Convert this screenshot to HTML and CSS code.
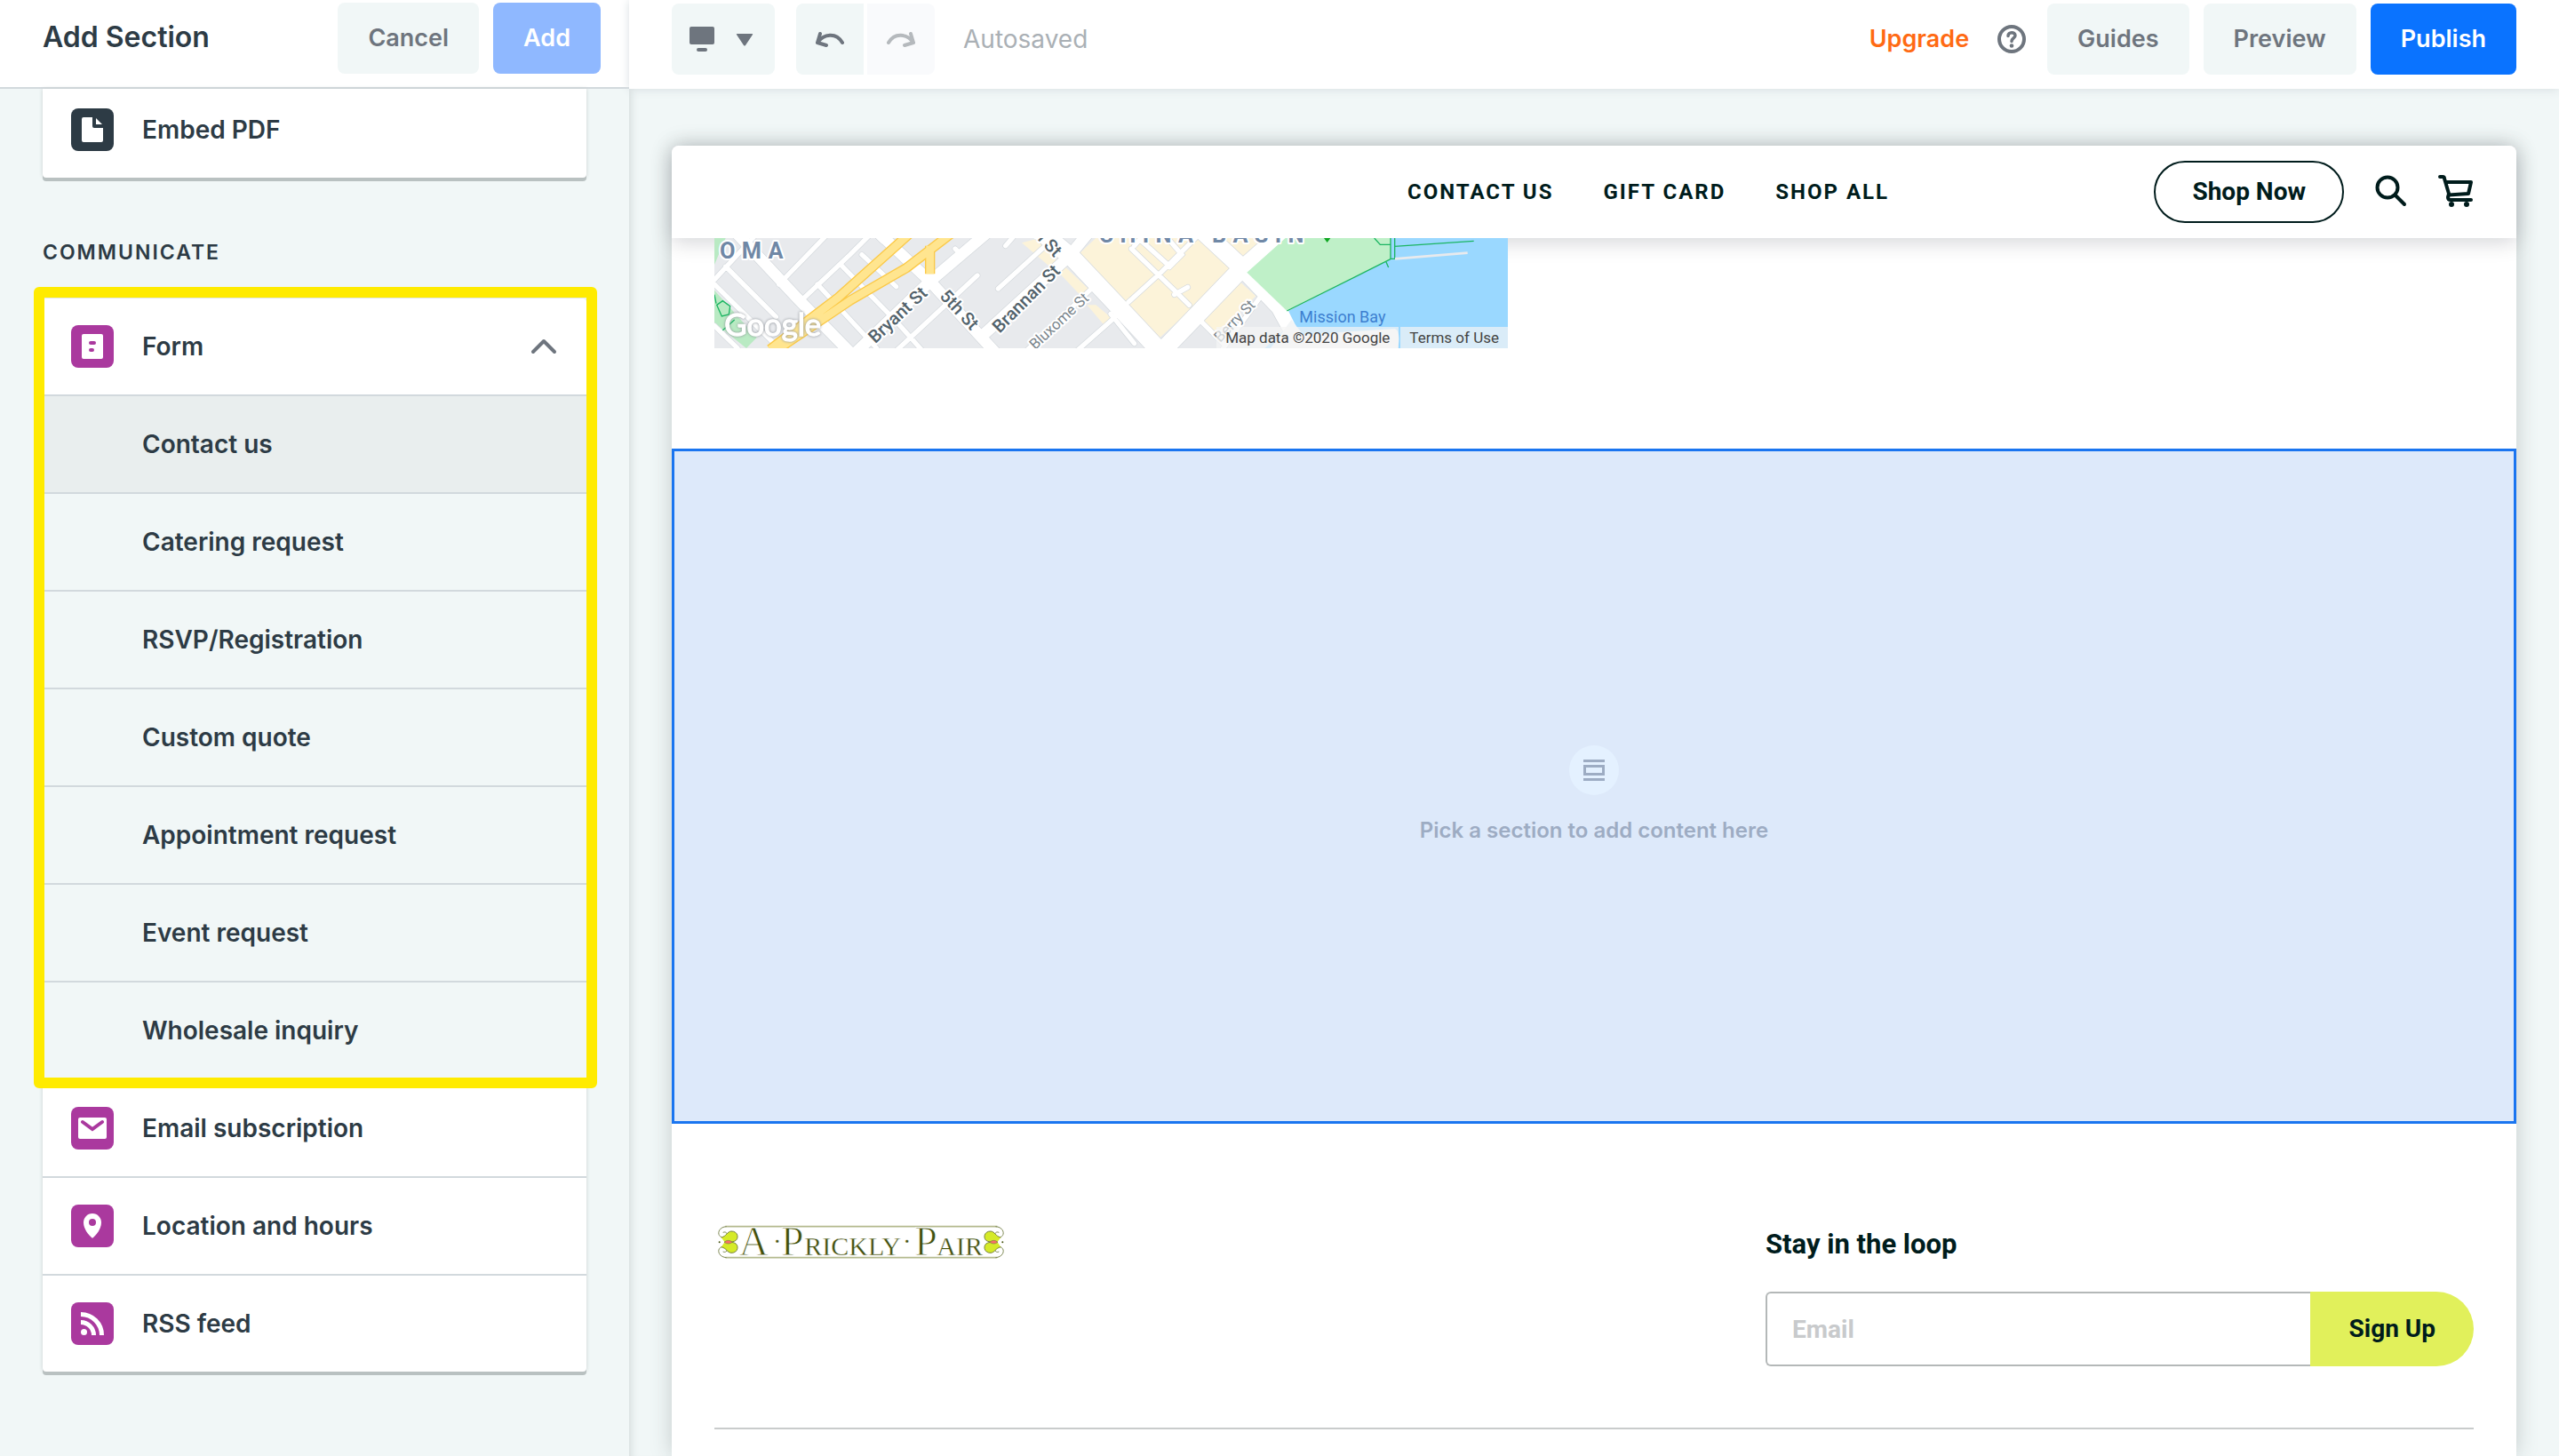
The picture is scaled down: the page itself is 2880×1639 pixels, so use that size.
FILE: index.html
```html
<!DOCTYPE html>
<html lang="en">
<head>
<meta charset="utf-8">
<meta name="viewport" content="width=device-width, initial-scale=1">
<title>Add Section</title>
<link rel="stylesheet" href="styles.css">
</head>
<body>
<div class="app">
  <aside class="sidebar">
    <header class="sidebar-head">
      <h1 class="sidebar-title">Add Section</h1>
      <button class="btn" type="button">Cancel</button>
      <button class="btn btn-add" type="button">Add</button>
    </header>
    <div class="sidebar-body">
      <div class="card card-cut">
        <button class="row row-last" type="button">
          <svg class="tile" viewBox="0 0 48 48" aria-hidden="true"><rect width="48" height="48" rx="8" fill="#2d3b45"/><path d="M14 10h10v10q0 2 2 2h10v14q0 2-2 2H14q-2 0-2-2V12q0-2 2-2z" fill="#fff"/><path d="M28 11l7 7h-7z" fill="#fff"/></svg>
          <span>Embed PDF</span>
        </button>
      </div>
      <h2 class="group-title">COMMUNICATE</h2>
      <div class="card">
        <div class="form-group">
          <button class="row" type="button" aria-expanded="true">
            <svg class="tile" viewBox="0 0 48 48" aria-hidden="true"><rect width="48" height="48" rx="8" fill="#aa399e"/><rect x="12" y="10" width="24" height="28" rx="2" fill="#fff"/><rect x="20" y="18" width="8" height="4" rx="2" fill="#aa399e"/><rect x="20" y="26" width="6" height="4" rx="2" fill="#aa399e"/></svg>
            <span>Form</span>
            <svg class="chevron" viewBox="0 0 32 20" aria-hidden="true"><path d="M4 16L16 4l12 12" fill="none" stroke="#6e757e" stroke-width="4" stroke-linecap="round" stroke-linejoin="round"/></svg>
          </button>
          <button class="row row-sub row-active" type="button">Contact us</button>
          <button class="row row-sub" type="button">Catering request</button>
          <button class="row row-sub" type="button">RSVP/Registration</button>
          <button class="row row-sub" type="button">Custom quote</button>
          <button class="row row-sub" type="button">Appointment request</button>
          <button class="row row-sub" type="button">Event request</button>
          <button class="row row-sub" type="button">Wholesale inquiry</button>
        </div>
        <button class="row" type="button">
          <svg class="tile" viewBox="0 0 48 48" aria-hidden="true"><rect width="48" height="48" rx="8" fill="#aa399e"/><rect x="8" y="12" width="32" height="24" rx="2" fill="#fff"/><path d="M13 17l11 8 11-8" fill="none" stroke="#aa399e" stroke-width="4" stroke-linecap="round"/></svg>
          <span>Email subscription</span>
        </button>
        <button class="row" type="button">
          <svg class="tile" viewBox="0 0 48 48" aria-hidden="true"><rect width="48" height="48" rx="8" fill="#aa399e"/><path d="M24 10c-6 0-10 5-10 10 0 8 6 14 9 17q1 1 2 0c3-3 9-9 9-17 0-5-4-10-10-10z" fill="#fff"/><circle cx="24" cy="20" r="4" fill="#aa399e"/></svg>
          <span>Location and hours</span>
        </button>
        <button class="row row-last" type="button">
          <svg class="tile" viewBox="0 0 48 48" aria-hidden="true"><rect width="48" height="48" rx="8" fill="#aa399e"/><circle cx="14.500" cy="33.500" r="3.500" fill="#fff"/><path d="M11 22.500a14.500 14.500 0 0 1 14.500 14.500M11 13.500a23.500 23.500 0 0 1 23.500 23.500" fill="none" stroke="#fff" stroke-width="5"/></svg>
          <span>RSS feed</span>
        </button>
      </div>
    </div>
  </aside>

  <main class="editor">
    <header class="toolbar">
      <button class="tool tool-device" type="button" aria-label="Device view">
        <svg width="76" height="32" viewBox="0 0 76 32" aria-hidden="true" fill="#6e757e"><rect x="0" y="2" width="28" height="20" rx="2"/><rect x="8" y="26" width="12" height="4" rx="2"/><path d="M54 10h16q2 0 1 1l-8 12q-1 1-2 0l-8-12q-1-1 1-1z"/></svg>
      </button>
      <div class="history">
        <button class="tool tool-undo" type="button" aria-label="Undo"><svg width="32" height="20" viewBox="0 0 32 20" aria-hidden="true" fill="none" stroke="#6e757e" stroke-width="4" stroke-linecap="round" stroke-linejoin="round"><path d="M5 4L2 14l10 3M2 14C9 4 23 2 30 14"/></svg></button>
        <button class="tool tool-redo" type="button" aria-label="Redo" disabled><svg width="32" height="20" viewBox="0 0 32 20" aria-hidden="true" fill="none" stroke="#b5b9bd" stroke-width="4" stroke-linecap="round" stroke-linejoin="round"><path d="M27 4l3 10-10 3M30 14C23 4 9 2 2 14"/></svg></button>
      </div>
      <span class="status">Autosaved</span>
      <a class="upgrade" href="#">Upgrade</a>
      <button class="help" type="button" aria-label="Help"><svg width="32" height="32" viewBox="0 0 32 32" aria-hidden="true" fill="none" stroke="#6e757e" stroke-width="4" stroke-linecap="round"><circle cx="16" cy="16" r="14"/><path d="M12 12.500c0-5 8-5 8-.5 0 3-4 3-4 6.500" stroke-width="3.500"/><circle cx="16" cy="23.500" r="2.300" fill="#6e757e" stroke="none"/></svg></button>
      <div class="actions">
        <button class="btn" type="button">Guides</button>
        <button class="btn" type="button">Preview</button>
        <button class="btn btn-publish" type="button">Publish</button>
      </div>
    </header>

    <div class="canvas">
      <div class="site">
        <header class="site-head">
          <nav class="site-nav">
            <a href="#">CONTACT US</a>
            <a href="#">GIFT CARD</a>
            <a href="#">SHOP ALL</a>
          </nav>
          <div class="site-tools">
            <button class="shop" type="button">Shop Now</button>
            <button class="icon-btn" type="button" aria-label="Search"><svg width="38" height="38" viewBox="0 0 38 38" aria-hidden="true" fill="none" stroke="#001c1c" stroke-width="4" stroke-linecap="round"><circle cx="15" cy="14" r="11.500"/><path d="M23.500 22.500L34 33"/></svg></button>
            <button class="icon-btn" type="button" aria-label="Cart"><svg width="40" height="38" viewBox="0 0 40 38" aria-hidden="true" fill="none" stroke="#001c1c" stroke-width="4" stroke-linecap="round" stroke-linejoin="round"><path d="M2 2h3q2 0 2 2l5 17-1 4q0 3 3 3h23"/><path d="M9 8h28l-3 13-22 1.500"/><circle cx="15" cy="33" r="3" fill="#001c1c" stroke="none"/><circle cx="32" cy="33" r="3" fill="#001c1c" stroke="none"/></svg></button>
          </div>
        </header>

        <section class="map-section">
          <div class="map">
            <svg class="map-art" viewBox="42 24 2679 372" role="img" aria-label="Map of Mission Bay">
              <defs>
                <g id="streets" fill="none">
                  <g class="wide"><path d="M590 0L770 170 990 410M970 0L770 170 520 410M1310 0L1240 85 940 360M110 0L320 225 500 410"/></g>
                  <g class="avenue"><path d="M1140 0L1250 90 1420 270 1560 420M1970 0L1800 150 1540 420M1690 0L1830 130 1950 255 2030 400"/></g>
                  <g class="lane"><path d="M42 165L180 15M42 180L260 396M80 120L250 290M42 320L120 396M260 180L420 15M470 115L660 310 740 400M390 180L590 396M330 240L500 80 570 10M540 80L656 188M930 150L650 410M1000 195L1165 45M1025 50L1060 10M590 15L610 35M855 60L875 80M1310 200L1090 410M1260 410L1430 260M1440 240L1550 140 1680 10M1450 60L1600 205 1645 250M1480 30L1580 120 1620 80 1560 10M1460 50L1490 15M1595 215L1640 190M1680 300L1760 380M1880 230L1760 396M1380 280L1460 380"/></g>
                </g>
              </defs>
              <rect x="42" y="24" width="2679" height="372" fill="#e8eaed"/>
              <path d="M42 24h38l-38 90zM42 200L185 360 150 396 42 310z" fill="#b9eac3"/>
              <path d="M1330 24H1900L1780 150 1535 370 1265 85zM1080 40L1140 24 1200 105 1180 125zM1205 140L1225 120 1310 200 1280 220zM1300 250L1330 250 1390 300 1360 320zM1680 300L1815 170 1870 220 1740 350z" fill="#fcf3d9"/>
              <use href="#streets" class="street-edge"/>
              <use href="#streets" class="street-fill"/>
              <path d="M1980 270L2325 95V24H2721V396H1900L1960 340 2020 350z" fill="#9ad8ff"/>
              <path d="M1840 140L1970 24H2325V95L1975 270z" fill="#bff0c8"/>
              <path d="M1990 300L2030 350 2340 330Q2360 340 2350 396H1920z" fill="#f3f5f6"/>
              <path d="M2270 24l20 22h35M2325 24v70h14V24M2325 95L1975 270M2310 105l8 18M2338 52l268-18" fill="none" stroke="#1bb562" stroke-width="4"/>
              <path d="M2340 94l245-20" stroke="#e8eaed" stroke-width="8"/>
              <path d="M42 215l6 30M50 250l20-14 25 18-4 28-24 6zM110 300l-40 35" fill="none" stroke="#1bb562" stroke-width="4"/>
              <g fill="none" stroke-linejoin="round">
                <path d="M700 10L460 225 230 400M840 10L690 125 500 235 240 410M770 50V145" stroke="#fbc947" stroke-width="34"/>
                <path d="M700 10L460 225 230 400M840 10L690 125 500 235 240 410M770 50V145" stroke="#ffe58f" stroke-width="26"/>
              </g>
              <g class="map-label">
                <text x="60" y="92" class="district">OMA</text>
                <text x="1340" y="40" class="district">CHINA BASIN</text>
                <text transform="translate(585 382) rotate(-43)">Bryant St</text>
                <text transform="translate(800 222) rotate(47)">5th St</text>
                <text transform="translate(1005 347) rotate(-45)">Brannan St</text>
                <text transform="translate(1105 0) rotate(47)">th St</text>
                <text transform="translate(1125 403) rotate(-43)" class="minor">Bluxome St</text>
                <text transform="translate(1750 378) rotate(-46)" class="minor">Berry St</text>
                <text x="2017" y="308" class="bay">Mission Bay</text>
              </g>
              <path d="M2100 24h22l-11 15z" fill="#0ca51f"/>
              <text x="76" y="355" class="watermark">Google</text>
            </svg>
            <div class="credits">
              <span class="credit">Map data ©2020 Google</span>
              <a class="credit" href="#">Terms of Use</a>
            </div>
          </div>
        </section>

        <section class="placeholder">
          <span class="placeholder-icon"><svg width="24" height="24" viewBox="0 0 24 24" aria-hidden="true" fill="none" stroke="#9dacc3" stroke-width="3"><path d="M0 1.500h24M0 22.500h24M1.500 7.500h21v9h-21z"/></svg></span>
          <p class="placeholder-text">Pick a section to add content here</p>
        </section>

        <footer class="site-foot">
          <div class="foot-main">
            <svg class="logo" viewBox="52 56 972 118" role="img" aria-label="A Prickly Pair">
              <path d="M80 63H998M80 168H998" stroke="#b3b98d" stroke-width="5"/>
              <g id="flourish">
                <path d="M84 63c-34 2-34 40-8 36 16-4 10-22-4-16M84 168c-34-2-34-40-8-36 16 4 10 22-4 16" fill="none" stroke="#7f8a55" stroke-width="3"/>
                <path d="M66 100C84 96 86 80 100 79c24-1 28 28 10 34-12 4-22 2-32 3M66 132C84 136 86 151 100 152c24 1 28-28 10-34-12-4-22-2-32-3" fill="#d5ea28" stroke="#78833f" stroke-width="3"/>
                <path d="M76 116q14-12 28 0-14 10-28 0z" fill="#fb6e6a" stroke="#78833f" stroke-width="2"/>
                <circle cx="60" cy="116" r="3" fill="#43500d"/>
              </g>
              <use href="#flourish" transform="translate(1076 0) scale(-1 1)"/>
              <text class="logo-text" y="161"><tspan x="126" class="cap">A</tspan><tspan x="240" y="142">·</tspan><tspan x="268" y="161" class="cap">P</tspan><tspan x="347">RICKLY</tspan><tspan x="678" y="142">·</tspan><tspan x="719" y="161" class="cap">P</tspan><tspan x="794">AIR</tspan></text>
            </svg>
            <form class="signup">
              <label class="signup-title" for="email">Stay in the loop</label>
              <div class="signup-row">
                <input class="signup-input" id="email" type="email" placeholder="Email">
                <button class="signup-btn" type="button">Sign Up</button>
              </div>
            </form>
          </div>
          <hr class="rule">
        </footer>
      </div>
    </div>
  </main>
</div>
</body>
</html>
```
FILE: styles.css
```css
* { box-sizing: border-box; }

body {
  margin: 0;
  background: #f1f7f7;
  color: #2d3b45;
  font: 600 28px/32px Inter, "Liberation Sans", sans-serif;
}

button, input { font: inherit; color: inherit; border: 0; padding: 0; background: none; }
a { color: inherit; text-decoration: none; }
svg { display: block; flex: none; }
h1, h2, p { margin: 0; }

.app { display: flex; height: 100vh; overflow: hidden; }

/* Sidebar */
.sidebar { flex: none; width: 708px; }
.sidebar-head {
  display: flex;
  align-items: flex-start;
  gap: 16px;
  height: 100px;
  padding: 3px 32px 0 48px;
  background: #fff;
  border-bottom: 2px solid #d2d9dd;
}
.sidebar-title { flex: 1; font-size: 32px; font-weight: 600; line-height: 78px; }

.btn {
  height: 80px;
  padding: 0 34px;
  border-radius: 8px;
  background: #f1f7f7;
  color: #6e757e;
  font-size: 27px;
}
.btn-add { background: #8fb8ff; color: #fff; }
.btn-publish { background: #0a73ff; color: #fff; }

.sidebar-body { padding: 0 48px; }
.card {
  border-radius: 4px;
  background: #fff;
  box-shadow: 0 4px 0 #b9c1c1, 0 0 4px #c8cfcf;
}
.card-cut { border-radius: 0 0 4px 4px; padding-bottom: 8px; }
.card-cut .row { height: 92px; }
.group-title {
  margin: 68px 0 35px;
  font-size: 23px;
  font-weight: 600;
  line-height: 33px;
  letter-spacing: 2px;
}
.row {
  display: flex;
  align-items: center;
  width: 100%;
  height: 110px;
  padding: 0 32px;
  gap: 32px;
  border-bottom: 2px solid #d2d9dd;
  text-align: left;
}
.row-last { height: 108px; border-bottom: 0; }
.row-sub { padding-left: 112px; background: #f1f7f7; }
.row-active { background: #e9eeee; }
.tile { width: 48px; height: 48px; }
.chevron { width: 32px; height: 20px; margin-left: auto; }

.form-group { position: relative; }
.form-group::after {
  content: "";
  position: absolute;
  inset: -13px -12px -9px -10px;
  border: 12px solid #ffeb00;
  border-radius: 6px;
  pointer-events: none;
}

/* Editor */
.editor {
  display: flex;
  flex-direction: column;
  flex: 1;
  min-width: 0;
  box-shadow: inset 10px 0 10px -8px #d3dada;
}
.toolbar {
  display: flex;
  align-items: center;
  height: 100px;
  padding: 0 48px 12px;
  background: #fff;
  box-shadow: 0 1px 10px #d8dfe2;
}
.tool { display: flex; align-items: center; justify-content: center; width: 76px; height: 80px; background: #f1f7f7; }
.tool-device { width: 116px; border-radius: 8px; }
.history { display: flex; gap: 4px; margin: 0 32px 0 24px; }
.tool-undo { border-radius: 8px 0 0 8px; }
.tool-redo { border-radius: 0 8px 8px 0; background: #f9fafc; }
.status { color: #aab0b5; font-weight: 400; }
.upgrade { margin-left: auto; color: #ff6a13; font-size: 27px; }
.help { margin: 0 24px 0 32px; }
.actions { display: flex; gap: 16px; }

.canvas { flex: 1; min-height: 0; padding: 64px 48px 0; }
.site {
  height: 100%;
  border-radius: 8px 8px 0 0;
  background: #fff;
  color: #001c1c;
  font: 700 28px/32px Roboto, "Liberation Sans", sans-serif;
  box-shadow: 0 0 24px #c3cbcb;
}
.site-head {
  position: relative;
  display: grid;
  grid-template-columns: 1fr auto 1fr;
  align-items: center;
  height: 104px;
  padding: 0 48px;
  border-radius: 8px 8px 0 0;
  background: #fff;
  box-shadow: 0 4px 24px rgba(0, 10, 30, .18);
}
.site-nav { display: flex; grid-column: 2; gap: 56px; padding-left: 122px; font-size: 24px; letter-spacing: 2px; }
.site-tools { display: flex; align-items: center; justify-content: flex-end; gap: 34px; }
.shop { height: 70px; padding: 0 41px; border: 2px solid #001c1c; border-radius: 35px; }

.map-section { padding: 0 48px 113px; }
.map { position: relative; width: 893px; max-width: 100%; }
.map-art { width: 100%; height: auto; }
.credits { position: absolute; right: 0; bottom: 0; display: flex; gap: 2px; font-size: 17px; font-weight: 400; line-height: 24px; color: #444; }
.credit { padding: 0 10px; background: rgba(245, 245, 245, .7); }

.street-edge { stroke: #d3d8dc; --w: 4px; }
.street-fill { stroke: #fff; --w: 0px; }
.wide { stroke-width: calc(38px + var(--w)); }
.avenue { stroke-width: calc(60px + var(--w)); }
.lane { stroke-width: calc(16px + var(--w)); stroke-linecap: round; }

.map-label { font-size: 60px; font-weight: 500; fill: #52626b; stroke: #fff; stroke-width: 12px; stroke-linejoin: round; paint-order: stroke; }
.district { font-size: 76px; font-weight: 700; fill: #7088a6; letter-spacing: 22px; }
.minor { font-size: 50px; font-weight: 400; fill: #7a858c; }
.bay { font-size: 54px; font-weight: 400; fill: #3d7fd0; stroke: none; }
.watermark { font: 400 104px Lato, sans-serif; fill: #fff; stroke: #fff; stroke-width: 4px; filter: drop-shadow(0 0 5px #8b9096); }

.placeholder {
  display: flex;
  flex-direction: column;
  align-items: center;
  gap: 24px;
  height: 760px;
  padding-top: 331px;
  border: 3px solid #1a75f0;
  background: #dde9fa;
  font: 600 24px/32px Inter, "Liberation Sans", sans-serif;
  color: #9dacc3;
}
.placeholder-icon { display: grid; place-items: center; width: 56px; height: 56px; border-radius: 50%; background: #e4f1ff; }

.site-foot { padding: 113px 48px 0; }
.foot-main { display: flex; justify-content: space-between; align-items: flex-start; }
.logo { width: 324px; height: 40px; margin-left: 3px; }
.logo-text { font: 400 90px "Liberation Serif", serif; fill: #43500d; stroke: #fff; stroke-width: 1px; }
.cap { font-size: 138px; stroke-width: 3px; }
.signup { width: 797px; }
.signup-title { display: block; margin: 2px 0 32px; font-size: 31px; line-height: 42px; }
.signup-row { display: flex; }
.signup-input { flex: 1; min-width: 0; height: 84px; padding: 0 28px; border: 2px solid #b4b8b8; border-right: 0; border-radius: 6px 0 0 6px; }
.signup-input::placeholder { color: #c8cacc; opacity: 1; }
.signup-btn { height: 84px; padding: 0 43px; border-radius: 0 42px 42px 0; background: #e1f05b; }
.rule { margin: 69px 0 0; border: 0; border-top: 2px solid #c9cccc; }
```
